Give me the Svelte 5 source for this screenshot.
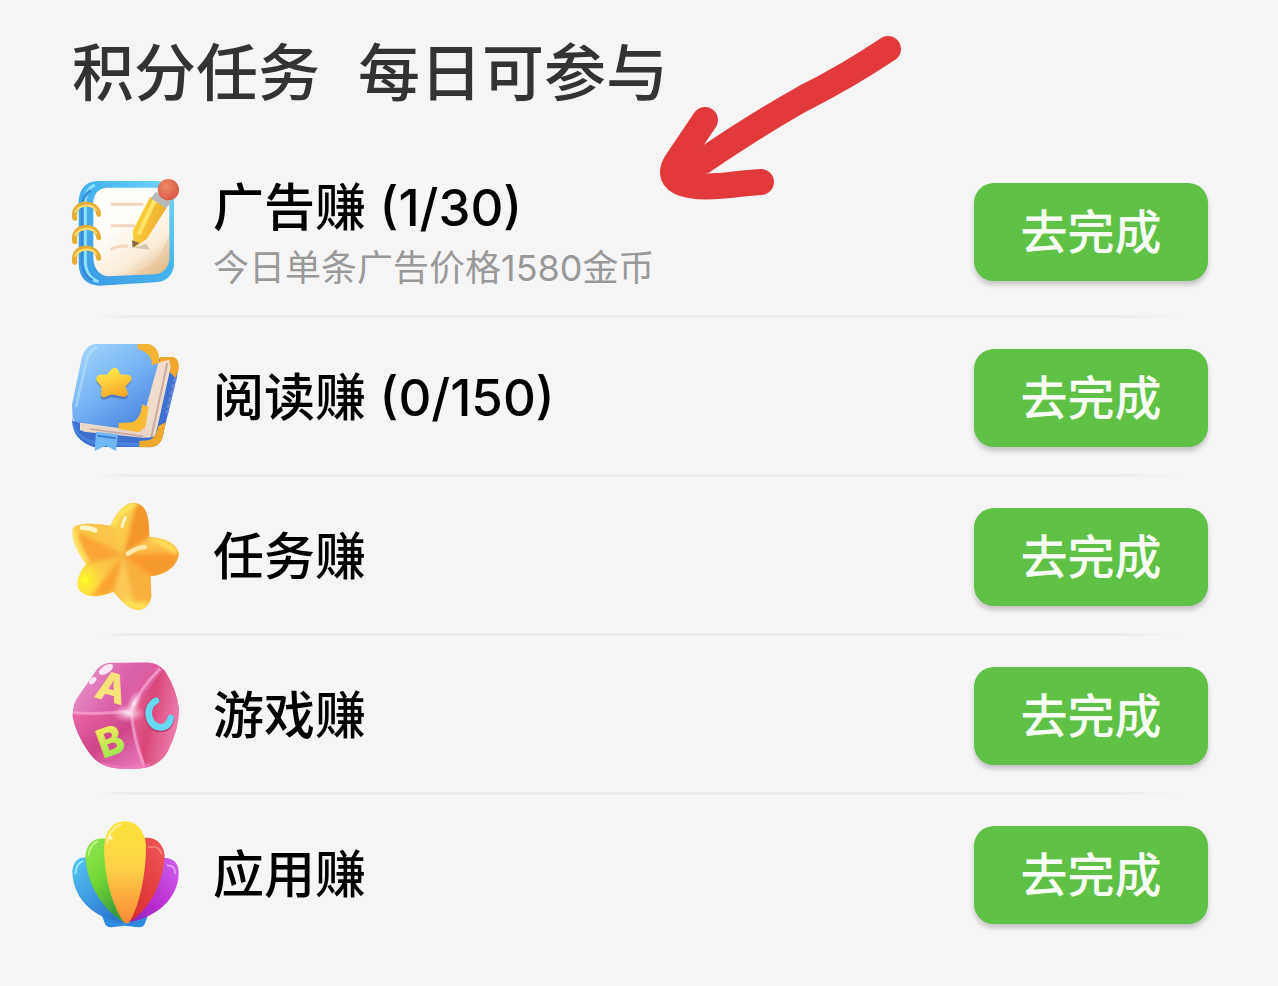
<script lang="ts">
  type Task = {
    icon: 'notebook' | 'book' | 'star' | 'dice' | 'shell';
    name: string;
    progress?: string;
    note?: string;
  };

  const tasks: Task[] = [
    { icon: 'notebook', name: '广告赚', progress: '(1/30)', note: '今日单条广告价格1580金币' },
    { icon: 'book', name: '阅读赚', progress: '(0/150)' },
    { icon: 'star', name: '任务赚' },
    { icon: 'dice', name: '游戏赚' },
    { icon: 'shell', name: '应用赚' },
  ];
</script>

{#snippet notebook()}
  <svg class="icon" viewBox="36 28 321 321" aria-hidden="true">
    <defs>
      <linearGradient id="nb-cover" x1="1" y1="0" x2="0" y2="1">
        <stop offset="0" stop-color="#72d8f8" />
        <stop offset="0.45" stop-color="#45b4ee" />
        <stop offset="1" stop-color="#3d9ae4" />
      </linearGradient>
      <linearGradient id="nb-page" x1="0.2" y1="0" x2="0.8" y2="1">
        <stop offset="0.35" stop-color="#fffefb" />
        <stop offset="0.75" stop-color="#f9ecd8" />
        <stop offset="1" stop-color="#e6bf90" />
      </linearGradient>
      <linearGradient id="nb-pencil" x1="0" y1="0" x2="1" y2="0.5">
        <stop offset="0.25" stop-color="#fbd23c" />
        <stop offset="1" stop-color="#eda72c" />
      </linearGradient>
      <radialGradient id="nb-rubber" cx="0.4" cy="0.35" r="0.7">
        <stop offset="0" stop-color="#f08a68" />
        <stop offset="1" stop-color="#d65742" />
      </radialGradient>
    </defs>
    <path d="M112 34H290Q342 36 342 90V288Q334 334 286 338L118 348Q58 344 56 282V92Q62 36 112 34Z" fill="url(#nb-cover)" />
    <path d="M104 46Q76 58 76 96V280Q80 326 116 336" fill="none" stroke="#8fe0fa" stroke-width="9" />
    <path d="M92 62Q68 78 66 110V280Q72 320 98 332" fill="none" stroke="#3787d8" stroke-width="7" />
    <path d="M138 54H286Q328 58 328 96V270Q320 312 282 314L142 320Q104 312 100 268V92Q106 58 138 54Z" fill="url(#nb-page)" />
    <path d="M328 190V270Q320 310 284 312L210 316Q300 290 328 190Z" fill="#e3bd8e" opacity="0.4" />
    <path d="M152 104H250M152 168H225M152 240Q175 226 204 230" fill="none" stroke="#f2d5bd" stroke-width="9" />
    <path d="M222 234L270 240L258 222Z" fill="#c9b49d" opacity="0.7" />
    <path d="M270 82L320 114L260 208L222 234L218 184Z" fill="url(#nb-pencil)" />
    <path d="M284 92L236 194" stroke="#ffe46a" stroke-width="12" />
    <path d="M216 212L238 220L218 234Z" fill="#89664d" />
    <path d="M288 66L334 98L318 116L272 86Z" fill="#b7b9bb" />
    <circle cx="325" cy="60" r="32" fill="url(#nb-rubber)" />
    {#each [0, 70, 132] as dy}
      <path d="M44 {146 + dy}C34 {92 + dy} 112 {90 + dy} 116 {134 + dy}" fill="none" stroke="#e6ad35" stroke-width="15" stroke-linecap="round" />
      <path d="M46 {126 + dy}C62 {100 + dy} 98 {104 + dy} 108 {120 + dy}" fill="none" stroke="#ffe075" stroke-width="6" stroke-linecap="round" />
    {/each}
  </svg>
{/snippet}

{#snippet book()}
  <svg class="icon" viewBox="36 27 321 321" aria-hidden="true">
    <defs>
      <linearGradient id="bk-cover" x1="0.1" y1="0" x2="0.8" y2="1">
        <stop offset="0" stop-color="#a0d6fb" />
        <stop offset="0.5" stop-color="#76b3f4" />
        <stop offset="1" stop-color="#4a83e0" />
      </linearGradient>
      <linearGradient id="bk-star" x1="0" y1="0" x2="0.4" y2="1">
        <stop offset="0" stop-color="#fff04c" />
        <stop offset="1" stop-color="#f8ae2c" />
      </linearGradient>
    </defs>
    <path d="M296 70L350 82Q358 92 350 128L308 302Q300 332 270 336H100Q38 314 38 262Z" fill="#3e70cf" />
    <path d="M300 66H340Q360 72 356 104L346 128L326 108V82L298 84Z" fill="#f1a72e" />
    <path d="M288 84L328 74L332 96L286 304L264 308L60 286V264Z" fill="#f0dccb" />
    <path d="M322 84L274 306" stroke="#c9aaa4" stroke-width="6" />
    <path d="M104 27H240Q294 34 294 88L252 240Q246 278 212 284L66 264Q44 264 38 248L36 210L62 84Q70 34 104 27Z" fill="url(#bk-cover)" />
    <path d="M112 38Q86 44 78 84L48 216" fill="none" stroke="#b8e2fc" stroke-width="8" opacity="0.6" />
    <path d="M38 250Q46 304 106 318L248 324Q278 322 290 290L312 270Q314 334 270 337L96 326Q38 302 36 260Z" fill="#4783dc" />
    <path d="M64 266L210 284L256 276L274 300L250 308L72 290Q60 284 64 266Z" fill="#ead6c6" />
    <path d="M90 282L250 304" stroke="#c3aaa3" stroke-width="5" />
    <path d="M232 27H266Q300 36 298 84L276 90Q276 54 234 42Z" fill="#f6b434" />
    <path d="M246 208L266 216L256 276L236 292L176 282V264L216 262Q244 252 246 208Z" fill="#f8ba32" />
    <path d="M296 272L318 262L306 314Q292 338 264 337H238V318L264 316Q286 314 296 272Z" fill="#f0a92d" />
    <path d="M346 128L320 236" stroke="#6b86d9" stroke-width="9" stroke-dasharray="14 6" />
    <g stroke-width="4" stroke-linejoin="round">
      <path d="M166 102Q172 102 180 124L206 126Q218 132 210 142L194 158L202 184Q200 192 184 190L154 184L132 192Q122 192 126 178L126 158L112 142Q108 130 118 126L144 124Q154 102 166 102Z" fill="#527bc4" stroke="#527bc4" />
      <path d="M166 100Q172 100 180 120L206 122Q218 128 210 138L194 154L202 176Q200 186 184 182L154 176L132 186Q122 184 126 170L126 154L112 138Q108 126 118 122L144 120Q154 100 166 100Z" fill="url(#bk-star)" stroke="url(#bk-star)" />
    </g>
    <path d="M108 290L174 298L168 348L138 332L104 348Z" fill="#70b8f3" />
    <path d="M112 302L168 310" stroke="#3e7fd5" stroke-width="6" />
  </svg>
{/snippet}

{#snippet star()}
  <svg class="icon" viewBox="36 24 321 321" aria-hidden="true">
    <defs>
      <linearGradient id="st-body" x1="0" y1="0.7" x2="1" y2="0.3">
        <stop offset="0" stop-color="#fde63e" />
        <stop offset="0.35" stop-color="#fbc246" />
        <stop offset="1" stop-color="#f7a636" />
      </linearGradient>
      <radialGradient id="st-shine" cx="0.5" cy="0.5" r="0.5">
        <stop offset="0" stop-color="#fffc20" />
        <stop offset="1" stop-color="#fde63e" stop-opacity="0" />
      </radialGradient>
      <filter id="st-soft">
        <feGaussianBlur stdDeviation="6" />
      </filter>
      <clipPath id="st-clip">
        <path d="M152 92C170 44 206 18 228 24C256 30 268 58 268 126C316 128 352 148 357 176C352 214 320 238 272 244L274 304C268 338 246 348 226 344C200 336 180 314 160 290C120 308 84 308 62 290C44 272 54 238 78 208C54 174 32 130 38 102C46 82 100 84 152 92Z" />
      </clipPath>
    </defs>
    <g clip-path="url(#st-clip)">
      <rect x="30" y="20" width="330" height="330" fill="url(#st-body)" />
      <!-- facets shade into each other rather than meeting at hard edges -->
      <g filter="url(#st-soft)">
        <path d="M228 24L190 180L274 132V50Z" fill="#f4962c" />
        <path d="M152 92L190 180L228 24Q180 30 152 92Z" fill="#fbcb4c" />
        <path d="M357 176L190 180L272 244Q346 232 357 176Z" fill="#f7982b" />
        <path d="M190 180L268 126Q330 134 357 176Q270 150 190 180Z" fill="#fcc24b" />
        <path d="M40 102L190 180L78 208Z" fill="#f9a634" />
        <path d="M40 102Q100 70 152 92L190 180Q120 116 40 102Z" fill="#fbc54a" />
        <path d="M190 180L92 306L160 290Z" fill="#f9a22e" />
        <path d="M190 180L160 290L228 348Z" fill="#fbc952" />
        <path d="M190 180L228 348L276 310L272 244Z" fill="#f9b13d" />
        <path d="M40 104Q30 136 76 206" fill="none" stroke="#fde566" stroke-width="30" />
        <path d="M190 320Q220 340 262 334" fill="none" stroke="#ffe455" stroke-width="24" />
        <path d="M272 128Q320 140 350 172" fill="none" stroke="#ffe15b" stroke-width="18" />
        <path d="M156 92Q176 42 228 26" fill="none" stroke="#fdec5c" stroke-width="16" />
      </g>
      <circle cx="76" cy="256" r="50" fill="url(#st-shine)" />
    </g>
    <path d="M186 94Q190 80 196 68" stroke="#fff3c5" stroke-width="10" stroke-linecap="round" fill="none" />
    <path d="M204 176Q228 158 254 156" stroke="#ffe8ae" stroke-width="14" stroke-linecap="round" fill="none" />
    <path d="M66 98Q86 96 106 106" stroke="#fff4c4" stroke-width="14" stroke-linecap="round" fill="none" />
  </svg>
{/snippet}

{#snippet dice()}
  <svg class="icon" viewBox="36 36 321 321" aria-hidden="true">
    <defs>
      <linearGradient id="dc-top" x1="0" y1="0" x2="1" y2="0.6">
        <stop offset="0" stop-color="#eda0d2" />
        <stop offset="0.45" stop-color="#d95fa6" />
        <stop offset="1" stop-color="#ea5b90" />
      </linearGradient>
      <linearGradient id="dc-right" x1="0" y1="0" x2="1" y2="0.4">
        <stop offset="0" stop-color="#e7679c" />
        <stop offset="0.5" stop-color="#da4678" />
        <stop offset="1" stop-color="#eb7cab" />
      </linearGradient>
      <linearGradient id="dc-left" x1="0" y1="0" x2="0.8" y2="1">
        <stop offset="0" stop-color="#ec68a8" />
        <stop offset="0.55" stop-color="#cd4788" />
        <stop offset="1" stop-color="#e875b7" />
      </linearGradient>
      <linearGradient id="dc-b" x1="0" y1="0" x2="0" y2="1">
        <stop offset="0.2" stop-color="#f1e95c" />
        <stop offset="1" stop-color="#86e94c" />
      </linearGradient>
      <radialGradient id="dc-glow">
        <stop offset="0" stop-color="#fff" stop-opacity="0.9" />
        <stop offset="1" stop-color="#fbb5db" stop-opacity="0" />
      </radialGradient>
      <clipPath id="dc-clip">
        <path d="M150 38L262 37Q292 38 314 62Q350 116 357 178Q356 240 324 302C306 338 270 356 226 356H180C134 352 108 338 86 306Q48 252 38 200Q36 166 54 140L108 62Q124 40 150 38Z" />
      </clipPath>
    </defs>
    <g clip-path="url(#dc-clip)">
      <rect x="36" y="36" width="321" height="321" fill="url(#dc-top)" />
      <path d="M310 58L216 184L258 357H357V58Z" fill="url(#dc-right)" />
      <path d="M36 190L216 184Q222 262 258 357H36Z" fill="url(#dc-left)" />
      <path d="M40 188Q120 194 212 184Q238 118 300 56M214 188Q220 270 254 352" fill="none" stroke="#f5a4cd" stroke-width="9" opacity="0.75" />
      <ellipse cx="206" cy="190" rx="52" ry="28" fill="url(#dc-glow)" />
      <ellipse cx="222" cy="160" rx="20" ry="44" fill="url(#dc-glow)" transform="rotate(22 222 160)" />
      <path d="M120 342Q190 366 270 346" fill="none" stroke="#f47ab9" stroke-width="14" opacity="0.7" />
    </g>
    <ellipse cx="138" cy="58" rx="24" ry="12" fill="#fde7f6" transform="rotate(-32 138 58)" />
    <ellipse cx="98" cy="92" rx="13" ry="8" fill="#fde7f6" transform="rotate(-45 98 92)" />
    <text class="letter" x="156" y="154" fill="#fbe37b" stroke="#fbe37b" transform="rotate(16 156 110)">A</text>
    <text class="letter" x="150" y="315" fill="url(#dc-b)" stroke="url(#dc-b)" transform="rotate(-20 150 272)">B</text>
    <path d="M288 152Q262 166 264 196Q270 232 300 236Q326 236 332 206" fill="none" stroke="#b53b70" stroke-width="22" stroke-linecap="round" />
    <path d="M288 152Q264 166 266 194Q272 230 302 232Q326 232 332 204" fill="none" stroke="#64d9ef" stroke-width="20" stroke-linecap="round" />
  </svg>
{/snippet}

{#snippet shell()}
  <svg class="icon" viewBox="36 33 321 321" aria-hidden="true">
    <defs>
      <linearGradient id="sh-blue" x1="0" y1="0" x2="0.7" y2="1">
        <stop offset="0" stop-color="#58c8f3" />
        <stop offset="1" stop-color="#2d77cf" />
      </linearGradient>
      <linearGradient id="sh-green" x1="0" y1="0" x2="0.5" y2="1">
        <stop offset="0" stop-color="#92e852" />
        <stop offset="0.55" stop-color="#71d536" />
        <stop offset="1" stop-color="#3b9e39" />
      </linearGradient>
      <linearGradient id="sh-yellow" x1="0" y1="0" x2="0" y2="1">
        <stop offset="0" stop-color="#fce33b" />
        <stop offset="0.45" stop-color="#fdd249" />
        <stop offset="1" stop-color="#fa8935" />
      </linearGradient>
      <linearGradient id="sh-red" x1="0.8" y1="0" x2="0.2" y2="1">
        <stop offset="0" stop-color="#ee5555" />
        <stop offset="1" stop-color="#d92c2d" />
      </linearGradient>
      <linearGradient id="sh-purple" x1="1" y1="0" x2="0.1" y2="1">
        <stop offset="0" stop-color="#cf63ee" />
        <stop offset="0.6" stop-color="#b82dd0" />
        <stop offset="1" stop-color="#8a25b9" />
      </linearGradient>
    </defs>
    <path d="M124 312L136 344Q142 352 154 352L194 347L236 352Q250 352 254 342L266 310Z" fill="#2e8ade" />
    <path d="M196 339C110 330 38 272 37 184C40 150 60 138 84 144Z" fill="url(#sh-blue)" />
    <path d="M196 339C284 326 356 268 356 188C356 158 338 142 308 143Z" fill="url(#sh-purple)" />
    <path d="M196 339C132 304 80 226 76 138C80 98 102 82 136 86Z" fill="url(#sh-green)" />
    <path d="M202 339C262 306 308 232 314 136C310 100 286 80 254 84Z" fill="url(#sh-red)" />
    <path d="M194 340C154 286 132 194 132 110C136 60 160 34 194 34C228 34 254 60 258 106C258 190 240 286 206 340Z" fill="url(#sh-yellow)" />
    <path d="M142 98Q146 58 184 42" fill="none" stroke="#fff2a0" stroke-width="5" stroke-linecap="round" />
    <path d="M86 134Q90 106 112 94" fill="none" stroke="#c7f990" stroke-width="5" stroke-linecap="round" />
    <path d="M46 190Q50 160 68 154" fill="none" stroke="#9eeeff" stroke-width="5" stroke-linecap="round" />
    <path d="M266 112Q296 104 304 130" fill="none" stroke="#f97f76" stroke-width="6" stroke-linecap="round" />
    <path d="M322 166Q346 166 346 190" fill="none" stroke="#e6a0fb" stroke-width="5" stroke-linecap="round" />
    <circle cx="152" cy="83" r="6" fill="#fff8cf" />
  </svg>
{/snippet}

<main class="page">
  <h1 class="heading"><span>积分任务</span><span>每日可参与</span></h1>

  <ul class="tasks">
    {#each tasks as task (task.icon)}
      <li class="task">
        {#if task.icon === 'notebook'}
          {@render notebook()}
        {:else if task.icon === 'book'}
          {@render book()}
        {:else if task.icon === 'star'}
          {@render star()}
        {:else if task.icon === 'dice'}
          {@render dice()}
        {:else}
          {@render shell()}
        {/if}
        <div class="info">
          <h2 class="name">{task.name}{#if task.progress}{' '}{task.progress}{/if}</h2>
          {#if task.note}<p class="note">{task.note}</p>{/if}
        </div>
        <button class="go" type="button">去完成</button>
      </li>
    {/each}
  </ul>

  <!-- hand-drawn marker over the first task -->
  <svg class="arrow" viewBox="658 35 246 166" aria-hidden="true">
    <path d="M888 49C858 69 836 82 804 98C770 117 740 136 703 161L694 164" />
    <path d="M705 120L678 160Q667 175 680 182Q694 189 730 185Q745 183 761 182" />
  </svg>
</main>

<style>
  :global(body) {
    margin: 0;
    background: #f5f5f5;
  }
  .page {
    position: relative;
    padding: 28px 70px 36px 72px;
    font-family: Inter, 'Noto Sans CJK SC', sans-serif;
    color: #000;
  }
  .heading {
    display: flex;
    gap: 38px;
    margin: 0;
    font-size: 62px;
    font-weight: 500;
    line-height: 92px;
    color: #333;
  }
  .tasks {
    list-style: none;
    margin: 0;
    padding: 26px 0 0;
  }
  .task {
    display: flex;
    align-items: center;
    gap: 34px;
    padding: 26px 0;
    background: linear-gradient(90deg, transparent, #ececec 2%, #ececec 95%, transparent) center bottom / calc(100% - 60px) 3px no-repeat;
  }
  .task:last-child { background: none; }
  .icon {
    flex: none;
    width: 107px;
    height: 107px;
    overflow: visible;
  }
  .letter {
    font-family: Inter, sans-serif;
    font-size: 116px;
    font-weight: 700;
    text-anchor: middle;
    stroke-width: 3;
    stroke-linejoin: round;
  }
  .info {
    flex: 1;
    min-width: 0;
  }
  .name {
    margin: 0;
    font-size: 51px;
    font-weight: 500;
    line-height: 72px;
  }
  .note {
    margin: 0;
    font-size: 36px;
    line-height: 48px;
    color: #999;
  }
  .go {
    flex: none;
    width: 234px;
    height: 98px;
    border: none;
    border-radius: 20px;
    padding: 0;
    background: #5fc246;
    box-shadow: 0 4px 5px rgb(0 0 0 / 0.2);
    font: 500 47px/98px Inter, 'Noto Sans CJK SC', sans-serif;
    color: #f7fff4;
    cursor: pointer;
  }
  .arrow {
    position: absolute;
    top: 35px;
    left: 658px;
    width: 246px;
    height: 166px;
    pointer-events: none;
  }
  .arrow path {
    fill: none;
    stroke: #e23a3a;
    stroke-width: 26;
    stroke-linecap: round;
    stroke-linejoin: round;
  }
</style>
